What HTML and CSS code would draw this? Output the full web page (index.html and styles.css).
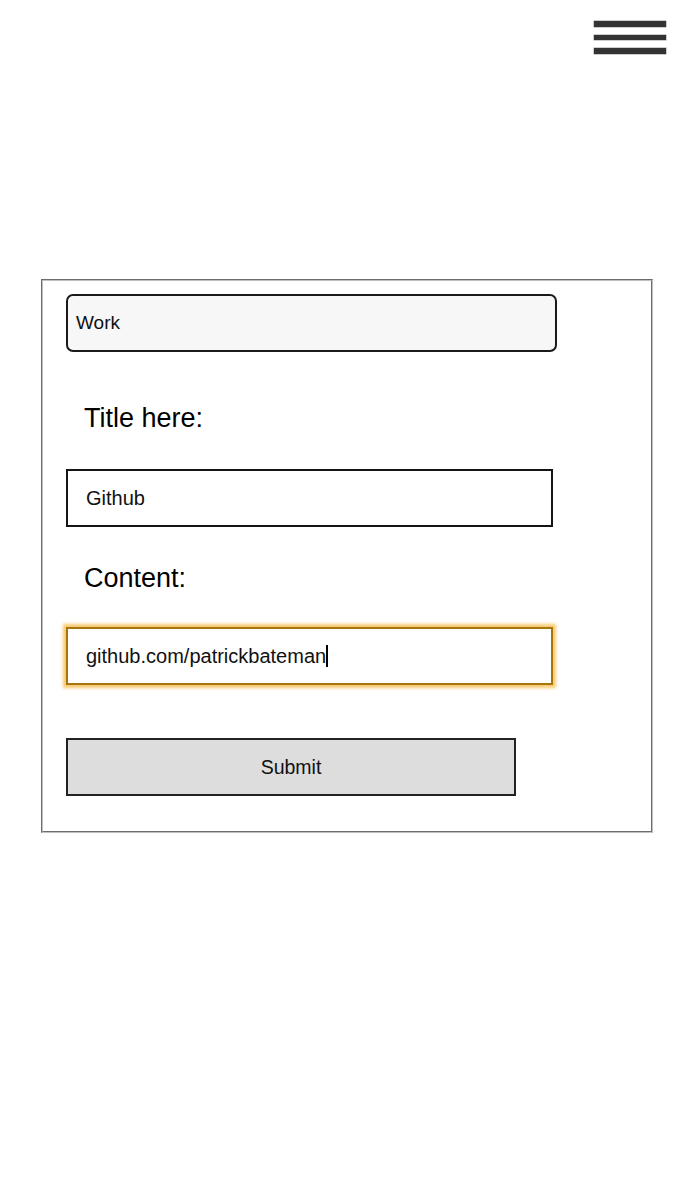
FILE: index.html
```html
<!DOCTYPE html>
<html lang="en">
<head>
<meta charset="utf-8">
<title>New entry</title>
<link rel="stylesheet" href="styles.css">
</head>
<body>
<header class="topbar">
  <button class="menu-btn" aria-label="Menu">
    <span class="bar"></span>
    <span class="bar"></span>
    <span class="bar"></span>
  </button>
</header>
<main class="main">
  <form class="entry-form">
    <div class="select-box">Work</div>
    <label class="label label-title">Title here:</label>
    <div class="field">Github</div>
    <label class="label label-content">Content:</label>
    <div class="field field-focus">github.com/patrickbateman<span class="caret"></span></div>
    <button type="button" class="submit">Submit</button>
  </form>
</main>
</body>
</html>
```
FILE: styles.css
```css
html, body {
  margin: 0;
  padding: 0;
  background: #ffffff;
}
body {
  font-family: "Liberation Sans", Arial, sans-serif;
  color: #111;
}
.topbar {
  display: flex;
  justify-content: flex-end;
  padding: 21px 30px 0 0;
  height: 33px;
}
.menu-btn {
  display: flex;
  flex-direction: column;
  gap: 8px;
  padding: 0;
  margin: 0;
  border: 0;
  background: transparent;
  width: 72px;
}
.bar {
  display: block;
  width: 72px;
  height: 5.5px;
  background: #333;
  box-shadow: 0 0 0 0.5px #9a9a9a;
}
.main {
  padding: 225px 0 0 41px;
}
.entry-form {
  box-sizing: border-box;
  width: 612px;
  border: 2px groove #c0c0c0;
  padding: 13px 0 35px 23px;
  display: flex;
  flex-direction: column;
  align-items: flex-start;
}
.select-box {
  box-sizing: border-box;
  width: 491px;
  height: 58px;
  border: 2px solid #1a1a1a;
  border-radius: 7px;
  background: #f7f7f7;
  display: flex;
  align-items: center;
  padding-left: 8px;
  font-size: 19px;
}
.label {
  display: block;
  font-size: 27px;
  line-height: 31px;
  margin-left: 18px;
  color: #000;
}
.label-title {
  margin-top: 51px;
  margin-bottom: 35px;
}
.label-content {
  margin-top: 36px;
  margin-bottom: 33px;
}
.field {
  box-sizing: border-box;
  width: 487px;
  height: 58px;
  border: 2px solid #151515;
  background: #fff;
  display: flex;
  align-items: center;
  padding-left: 18px;
  font-size: 20px;
}
.field-focus {
  border-color: #a87508;
  box-shadow: 0 0 3px 3px rgba(244, 178, 50, 0.7);
}
.caret {
  display: inline-block;
  width: 1.5px;
  height: 22px;
  background: #000;
  margin-left: 0;
}
.submit {
  box-sizing: border-box;
  margin-top: 53px;
  width: 450px;
  height: 58px;
  border: 2px solid #222;
  background: #dddddd;
  font-family: "Liberation Sans", Arial, sans-serif;
  font-size: 19.5px;
  color: #111;
  padding: 0;
}
```
